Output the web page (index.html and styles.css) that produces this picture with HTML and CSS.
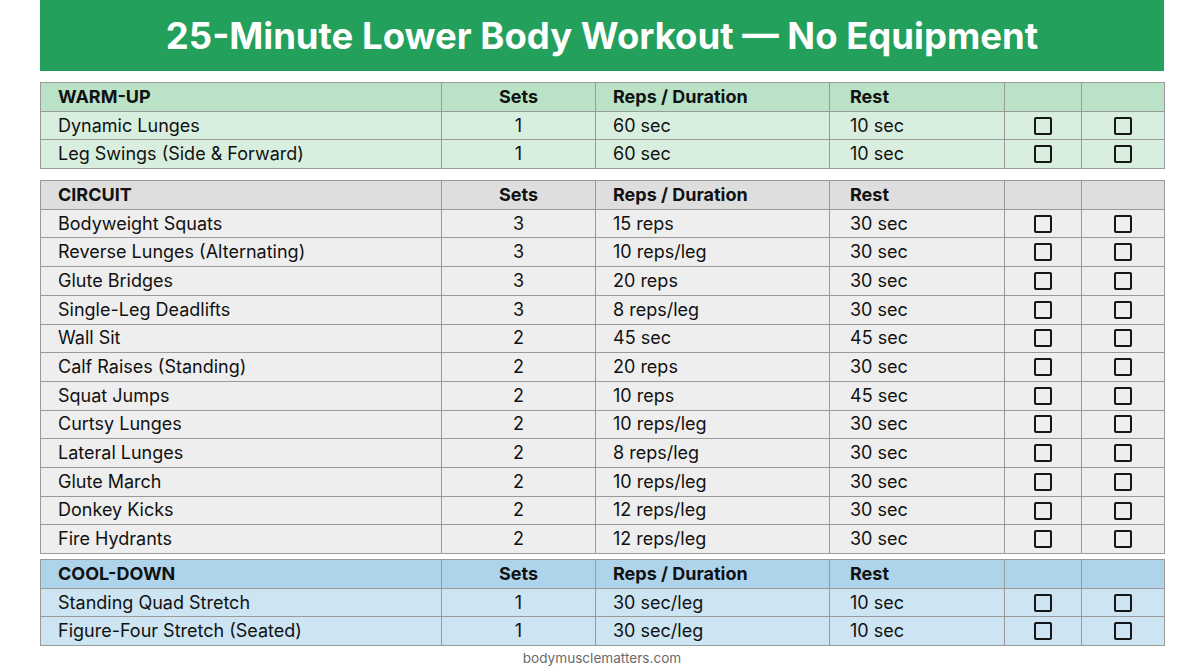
FILE: index.html
```html
<!DOCTYPE html>
<html>
<head>
<meta charset="utf-8">
<link rel="stylesheet" href="styles.css">
</head>
<body>
<div class="page">
  <header class="banner"><h1>25-Minute Lower Body Workout — No Equipment</h1></header>

  <table class="tbl warm">
    <colgroup><col class="c1"><col class="c2"><col class="c3"><col class="c4"><col class="c5"><col class="c6"></colgroup>
    <thead><tr><th>WARM-UP</th><th class="ctr">Sets</th><th>Reps / Duration</th><th class="rest">Rest</th><th></th><th></th></tr></thead>
    <tbody>
      <tr><td>Dynamic Lunges</td><td class="ctr">1</td><td>60 sec</td><td class="rest">10 sec</td><td class="ctr"><span class="box"></span></td><td class="ctr"><span class="box"></span></td></tr>
      <tr><td>Leg Swings (Side &amp; Forward)</td><td class="ctr">1</td><td>60 sec</td><td class="rest">10 sec</td><td class="ctr"><span class="box"></span></td><td class="ctr"><span class="box"></span></td></tr>
    </tbody>
  </table>

  <table class="tbl circuit">
    <colgroup><col class="c1"><col class="c2"><col class="c3"><col class="c4"><col class="c5"><col class="c6"></colgroup>
    <thead><tr><th>CIRCUIT</th><th class="ctr">Sets</th><th>Reps / Duration</th><th class="rest">Rest</th><th></th><th></th></tr></thead>
    <tbody>
      <tr><td>Bodyweight Squats</td><td class="ctr">3</td><td>15 reps</td><td class="rest">30 sec</td><td class="ctr"><span class="box"></span></td><td class="ctr"><span class="box"></span></td></tr>
      <tr><td>Reverse Lunges (Alternating)</td><td class="ctr">3</td><td>10 reps/leg</td><td class="rest">30 sec</td><td class="ctr"><span class="box"></span></td><td class="ctr"><span class="box"></span></td></tr>
      <tr><td>Glute Bridges</td><td class="ctr">3</td><td>20 reps</td><td class="rest">30 sec</td><td class="ctr"><span class="box"></span></td><td class="ctr"><span class="box"></span></td></tr>
      <tr><td>Single-Leg Deadlifts</td><td class="ctr">3</td><td>8 reps/leg</td><td class="rest">30 sec</td><td class="ctr"><span class="box"></span></td><td class="ctr"><span class="box"></span></td></tr>
      <tr><td>Wall Sit</td><td class="ctr">2</td><td>45 sec</td><td class="rest">45 sec</td><td class="ctr"><span class="box"></span></td><td class="ctr"><span class="box"></span></td></tr>
      <tr><td>Calf Raises (Standing)</td><td class="ctr">2</td><td>20 reps</td><td class="rest">30 sec</td><td class="ctr"><span class="box"></span></td><td class="ctr"><span class="box"></span></td></tr>
      <tr><td>Squat Jumps</td><td class="ctr">2</td><td>10 reps</td><td class="rest">45 sec</td><td class="ctr"><span class="box"></span></td><td class="ctr"><span class="box"></span></td></tr>
      <tr><td>Curtsy Lunges</td><td class="ctr">2</td><td>10 reps/leg</td><td class="rest">30 sec</td><td class="ctr"><span class="box"></span></td><td class="ctr"><span class="box"></span></td></tr>
      <tr><td>Lateral Lunges</td><td class="ctr">2</td><td>8 reps/leg</td><td class="rest">30 sec</td><td class="ctr"><span class="box"></span></td><td class="ctr"><span class="box"></span></td></tr>
      <tr><td>Glute March</td><td class="ctr">2</td><td>10 reps/leg</td><td class="rest">30 sec</td><td class="ctr"><span class="box"></span></td><td class="ctr"><span class="box"></span></td></tr>
      <tr><td>Donkey Kicks</td><td class="ctr">2</td><td>12 reps/leg</td><td class="rest">30 sec</td><td class="ctr"><span class="box"></span></td><td class="ctr"><span class="box"></span></td></tr>
      <tr><td>Fire Hydrants</td><td class="ctr">2</td><td>12 reps/leg</td><td class="rest">30 sec</td><td class="ctr"><span class="box"></span></td><td class="ctr"><span class="box"></span></td></tr>
    </tbody>
  </table>

  <table class="tbl cool">
    <colgroup><col class="c1"><col class="c2"><col class="c3"><col class="c4"><col class="c5"><col class="c6"></colgroup>
    <thead><tr><th>COOL-DOWN</th><th class="ctr">Sets</th><th>Reps / Duration</th><th class="rest">Rest</th><th></th><th></th></tr></thead>
    <tbody>
      <tr><td>Standing Quad Stretch</td><td class="ctr">1</td><td>30 sec/leg</td><td class="rest">10 sec</td><td class="ctr"><span class="box"></span></td><td class="ctr"><span class="box"></span></td></tr>
      <tr><td>Figure-Four Stretch (Seated)</td><td class="ctr">1</td><td>30 sec/leg</td><td class="rest">10 sec</td><td class="ctr"><span class="box"></span></td><td class="ctr"><span class="box"></span></td></tr>
    </tbody>
  </table>

  <footer class="foot">bodymusclematters.com</footer>
</div>
</body>
</html>
```
FILE: styles.css
```css
html, body {
  margin: 0;
  padding: 0;
  background: #ffffff;
}
.page {
  width: 1124px;
  margin: 0 40px;
  font-family: Inter, "Liberation Sans", sans-serif;
  color: #111;
}
.banner {
  background: #23a05b;
  height: 71px;
  display: flex;
  align-items: center;
  justify-content: center;
}
.banner h1 {
  margin: 0;
  color: #fff;
  font-size: 36.5px;
  font-weight: 700;
  letter-spacing: 0;
}
.tbl {
  width: 1124px;
  table-layout: fixed;
  border-collapse: collapse;
  border: 1px solid #9a9a9a;
  font-size: 18px;
}
.warm { margin-top: 11px; }
.circuit { margin-top: 11px; }
.cool { margin-top: 5px; }
.c1 { width: 401px; }
.c2 { width: 154px; }
.c3 { width: 234px; }
.c4 { width: 175px; }
.c5 { width: 77px; }
.c6 { width: 83px; }
.tbl tr { height: 28.7px; }
.tbl th, .tbl td {
  border: 1px solid #9a9a9a;
  padding: 0 0 0 17px;
  text-align: left;
  line-height: 20px;
  vertical-align: middle;
  white-space: nowrap;
}
.tbl th { font-weight: 700; }
.tbl .ctr { text-align: center; padding: 0; }
.tbl .rest { padding-left: 20px; }
.warm thead tr { background: #b9e2c6; }
.warm tbody tr { background: #d8eedf; }
.circuit thead tr { background: #dedede; }
.circuit tbody tr { background: #eeeeee; }
.cool thead tr { background: #aed4ec; }
.cool tbody tr { background: #cde4f3; }
.box {
  display: inline-block;
  width: 14px;
  height: 14px;
  border: 2px solid #161616;
  border-radius: 2px;
  vertical-align: middle;
  position: relative;
  top: -1px;
}
.foot {
  text-align: center;
  font-size: 13.6px;
  color: #6a6a6a;
  margin-top: 4px;
}
```
